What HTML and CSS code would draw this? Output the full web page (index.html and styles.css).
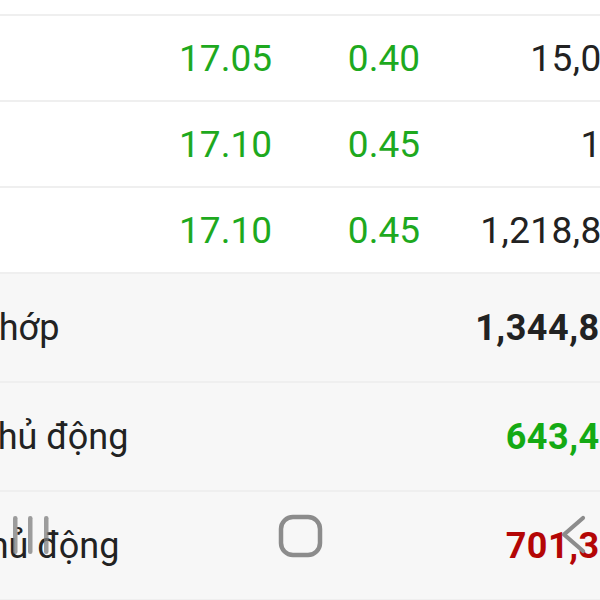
FILE: index.html
```html
<!DOCTYPE html>
<html lang="vi">
<head>
<meta charset="utf-8">
<link rel="stylesheet" href="styles.css">
</head>
<body>
<div class="page">
  <div class="trades">
    <div class="row row-cut"></div>
    <div class="row">
      <span class="cell up">17.05</span>
      <span class="cell up">0.40</span>
      <span class="cell vol">15,000</span>
    </div>
    <div class="row">
      <span class="cell up">17.10</span>
      <span class="cell up">0.45</span>
      <span class="cell vol">100</span>
    </div>
    <div class="row">
      <span class="cell up">17.10</span>
      <span class="cell up">0.45</span>
      <span class="cell vol">1,218,800</span>
    </div>
  </div>
  <div class="summary">
    <div class="srow">
      <span class="label">Mức khớp</span>
      <span class="value">1,344,800</span>
    </div>
    <div class="srow">
      <span class="label">Mua chủ động</span>
      <span class="value buy">643,450</span>
    </div>
    <div class="srow">
      <span class="label">Bán chủ động</span>
      <span class="value sell">701,350</span>
    </div>
  </div>
</div>
<nav class="navbar">
  <svg class="nav-recent" width="40" height="40" viewBox="0 0 40 40">
    <rect x="1" y="1" width="4.5" height="38" rx="2.2"/>
    <rect x="16" y="1" width="4.5" height="38" rx="2.2"/>
    <rect x="32" y="1" width="4.5" height="38" rx="2.2"/>
  </svg>
  <svg class="nav-home" width="46" height="46" viewBox="0 0 46 46">
    <rect x="3" y="3" width="39" height="38" rx="12" fill="none" stroke-width="4.5"/>
  </svg>
  <svg class="nav-back" width="28" height="40" viewBox="0 0 28 40">
    <polyline points="23,3 4,19.5 23,36" fill="none" stroke-width="4.2" stroke-linecap="round" stroke-linejoin="round"/>
  </svg>
</nav>
</body>
</html>
```

FILE: styles.css
```css
html, body {
  margin: 0;
  padding: 0;
  overflow: hidden;
  background: #f7f7f7;
}

.page {
  width: 600px;
  height: 600px;
  overflow: hidden;
  font-family: Roboto, "Noto Sans", sans-serif;
  color: #222;
}

.trades {
  background: #ffffff;
}

.row {
  display: grid;
  grid-template-columns: 272px 148px 224px;
  width: 644px;
  height: 84px;
  align-items: center;
  border-bottom: 2px solid #efefef;
  font-size: 37px;
}

.row-cut {
  height: 14px;
}

.cell {
  text-align: right;
  line-height: 1;
}

.up {
  color: #1ea91e;
}

.vol {
  color: #222;
  letter-spacing: 0.4px;
}

.summary {
  background: #f7f7f7;
}

.srow {
  display: flex;
  justify-content: space-between;
  align-items: center;
  height: 107px;
  margin-left: -101px;
  margin-right: -42px;
  border-bottom: 2px solid #efefef;
}

.label {
  font-size: 36px;
  color: #222;
  line-height: 1;
}

.value {
  font-size: 36px;
  font-weight: 700;
  letter-spacing: 0.5px;
  color: #222;
  line-height: 1;
}

.buy {
  color: #14aa14;
}

.sell {
  color: #b40606;
}

.navbar {
  position: fixed;
  left: 0;
  right: 0;
  top: 514px;
  height: 46px;
}

.nav-recent {
  position: absolute;
  left: 12px;
  top: 1px;
  fill: rgba(125, 125, 125, 0.75);
}

.nav-home {
  position: absolute;
  left: 278px;
  top: 0;
  stroke: #8c8c8c;
}

.nav-back {
  position: absolute;
  left: 560px;
  top: 1px;
  stroke: #8c8c8c;
}
```
